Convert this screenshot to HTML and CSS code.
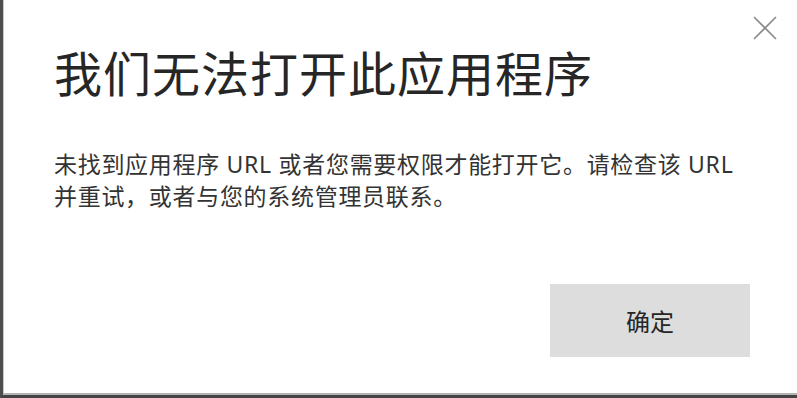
FILE: index.html
```html
<!DOCTYPE html>
<html lang="zh-CN">
<head>
<meta charset="utf-8">
<link rel="stylesheet" href="styles.css">
<title>Dialog</title>
</head>
<body>
<div class="frame">
  <div class="dialog">
    <button class="close" aria-label="关闭">
      <svg width="24" height="24" viewBox="0 0 24 24"><path d="M1 1 L23 23 M23 1 L1 23" stroke="#8a8a8a" stroke-width="1.6" fill="none"/></svg>
    </button>
    <h1 class="title">我们无法打开此应用程序</h1>
    <p class="message">未找到应用程序 URL 或者您需要权限才能打开它。请检查该 URL 并重试，或者与您的系统管理员联系。</p>
    <div class="actions">
      <button class="ok">确定</button>
    </div>
  </div>
</div>
</body>
</html>
```

FILE: styles.css
```css
html, body {
  margin: 0;
  padding: 0;
  background: #ffffff;
}
body {
  width: 797px;
  height: 398px;
  overflow: hidden;
  font-family: "Noto Sans", "Noto Sans CJK SC", sans-serif;
}
.frame {
  box-sizing: border-box;
  width: 797px;
  height: 398px;
  border-left: 3px solid #4d4d4d;
  border-bottom: 3px solid #444444;
}
.dialog {
  position: relative;
  box-sizing: border-box;
  height: 100%;
  border-left: 1px solid #c8c8c8;
  border-bottom: 2px solid #b4b4b4;
  padding: 44px 47px 0 50px;
  display: flex;
  flex-direction: column;
}
.close {
  position: absolute;
  top: 16px;
  right: 20px;
  width: 24px;
  height: 24px;
  padding: 0;
  border: 0;
  background: transparent;
  display: flex;
}
.title {
  margin: 0;
  font-size: 48px;
  line-height: 60px;
  font-weight: 400;
  letter-spacing: 1px;
  color: #262626;
}
.message {
  margin: 44px 0 0;
  font-size: 23px;
  line-height: 32px;
  letter-spacing: 0.7px;
  color: #333333;
}
.actions {
  margin-top: 72px;
  display: flex;
  justify-content: flex-end;
}
.ok {
  width: 200px;
  height: 73px;
  border: 0;
  background: #dddddd;
  font-family: "Noto Sans", "Noto Sans CJK SC", sans-serif;
  font-size: 24px;
  color: #262626;
  padding: 0;
}
```
